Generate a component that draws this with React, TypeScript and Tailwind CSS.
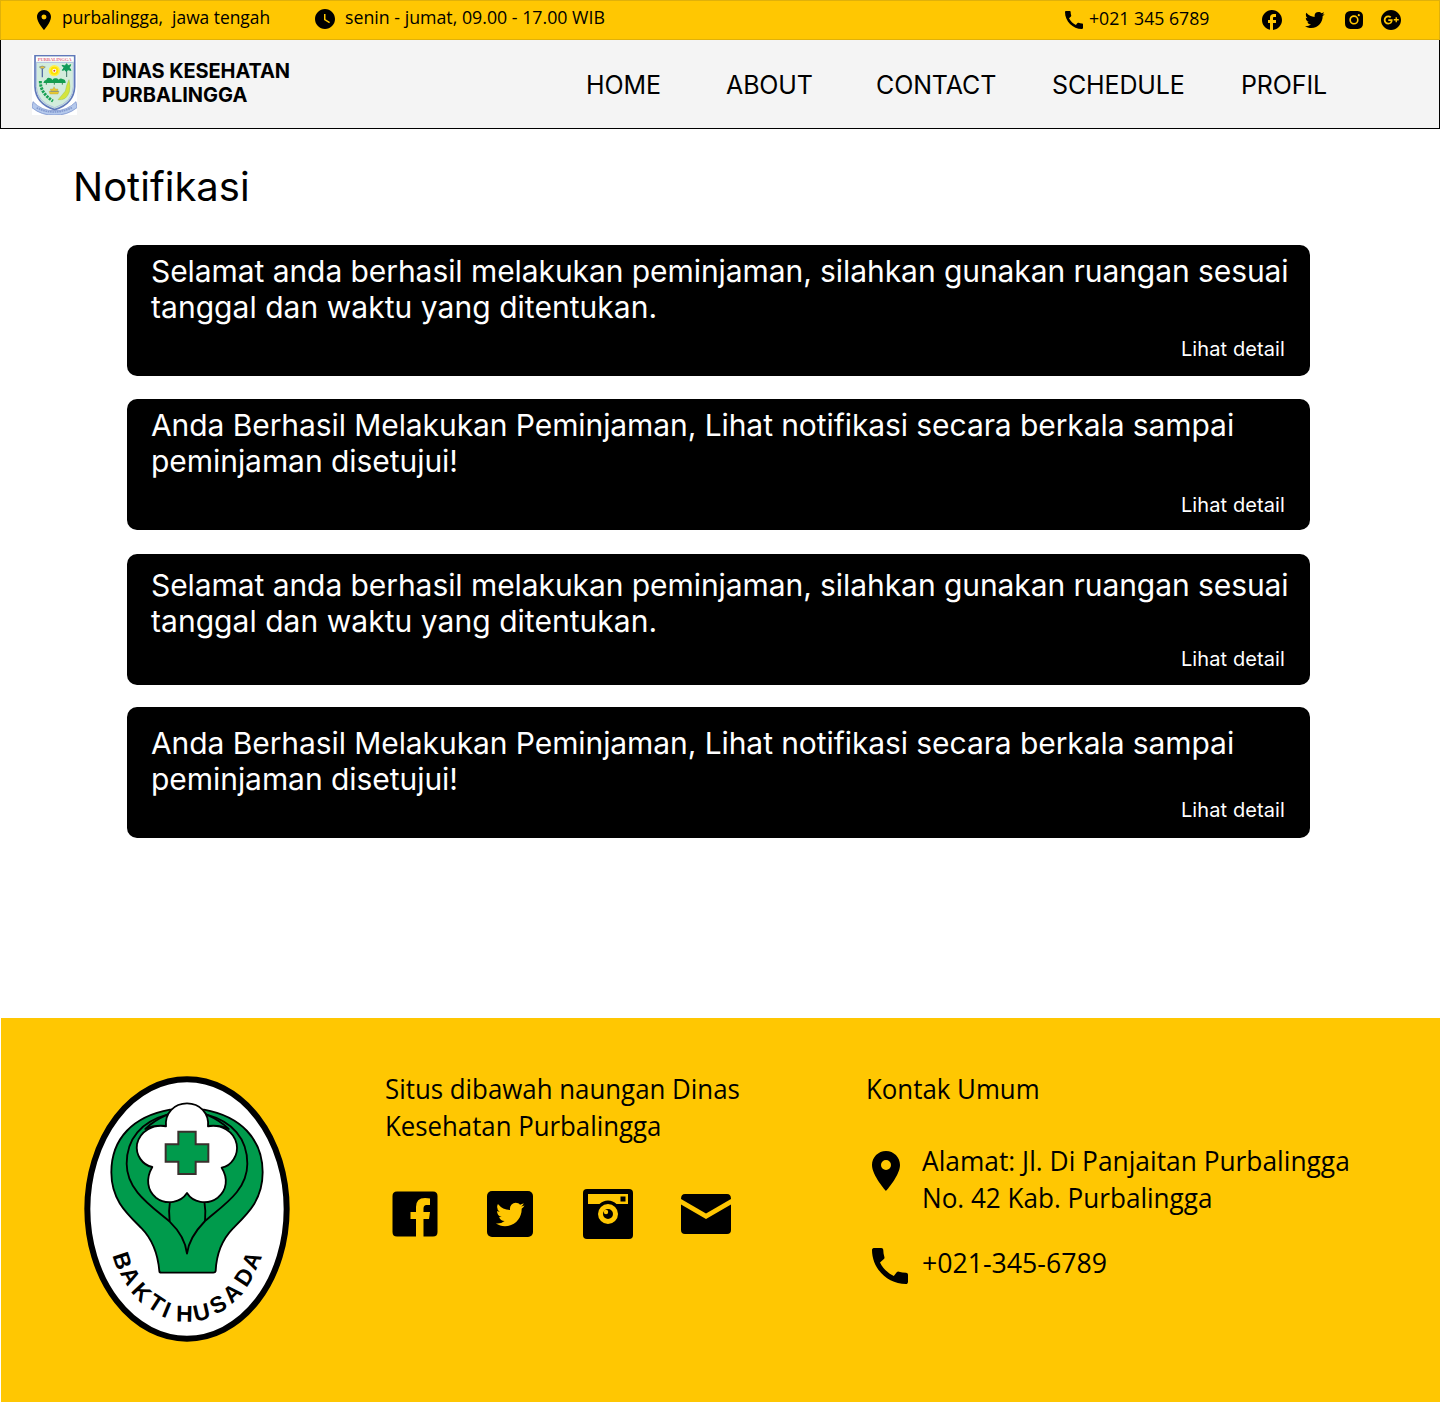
import React from "react";
import { MdLocationOn, MdWatchLater, MdCall, MdFacebook } from "react-icons/md";
import { BiLogoTwitter, BiLogoInstagramAlt, BiLogoGooglePlusCircle } from "react-icons/bi";

const success = [
  "Selamat anda berhasil melakukan peminjaman, silahkan gunakan ruangan sesuai",
  "tanggal dan waktu yang ditentukan.",
];
const pending = [
  "Anda Berhasil Melakukan Peminjaman, Lihat notifikasi secara berkala sampai",
  "peminjaman disetujui!",
];

const notifications = [
  { text: success, card: "mt-[33px] pt-[8px]", link: "mt-[12px]", tracking: "tracking-[-0.07px]", tail: "tracking-[0.04px]" },
  { text: pending, card: "mt-[23px] pt-[8px]", link: "mt-[14px]", tracking: "tracking-[-0.08px]", tail: "tracking-[-0.05px]" },
  { text: success, card: "mt-[24px] pt-[13px]", link: "mt-[8px]", tracking: "tracking-[-0.07px]", tail: "tracking-[0.04px]" },
  { text: pending, card: "mt-[22px] pt-[18px]", link: "mt-px", tracking: "tracking-[-0.08px]", tail: "tracking-[-0.05px]" },
];

const letters: [string, number, number, number][] = [
  ["B", 157, 587, 72],
  ["A", 182, 633, 60],
  ["K", 215, 681, 47],
  ["T", 259, 714, 33],
  ["I", 290, 734, 22],
  ["H", 343, 746, 1],
  ["U", 395, 741, -13],
  ["S", 444, 718, -28],
  ["A", 486, 684, -43],
  ["D", 522, 636, -57],
  ["A", 545, 586, -66],
];

function Narrow({ children, className }: { children: React.ReactNode; className: string }) {
  return (
    <span
      className={`block origin-left whitespace-pre font-['Open_Sans',sans-serif] ${className}`}
    >
      {children}
    </span>
  );
}

function Crest() {
  return (
    <svg width="45" height="60" viewBox="0 0 135 180" className="shrink-0">
      <rect width="135" height="180" fill="#fff" />
      <path
        d="M3 140q26 28 64 27q38 1 65-27l3 18q-30 24-68 22q-38 2-67-22z"
        fill="#b5c9ec"
        stroke="#6c86c6"
        strokeWidth="2"
      />
      <path d="M14 158q50 26 106 0" fill="none" stroke="#8299cf" strokeWidth="5" strokeDasharray="5 2" />
      <path
        d="M9 2H128V95Q126 146 68 164Q11 146 9 95z"
        fill="#d3ecdc"
        stroke="#6078bb"
        strokeWidth="5"
      />
      <path d="M13 22H124V95Q122 142 68 158Q15 142 13 95z" fill="#d3ecdc" stroke="#aebfe2" strokeWidth="3" />
      <rect x="12" y="5" width="113" height="15" fill="#fff" />
      <text
        x="68"
        y="18"
        textAnchor="middle"
        textLength="102"
        fontSize="14"
        fontWeight="700"
        fill="#e06a83"
        fontFamily="Liberation Serif, serif"
      >
        PURBALINGGA
      </text>
      <circle cx="67" cy="47" r="17" fill="#fff04a" />
      <circle cx="67" cy="47" r="12" fill="#ffe100" />
      <circle cx="67" cy="47" r="6" fill="#fff" />
      <circle cx="67" cy="47" r="3" fill="#e23d22" />
      <path d="M22 36q9-6 18 0l-6 5h-6z" fill="#e6c23c" stroke="#486a9c" strokeWidth="1.5" />
      <path d="M31 41v26" stroke="#566ea5" strokeWidth="4" />
      <path d="M104 42v24" stroke="#3d7168" strokeWidth="3" />
      <path
        d="M104 26l4 7 8-4-4 9 5 8-10-2-4 6-4-6-8 2 5-8-6-7 9 2z"
        fill="#119b59"
        stroke="#119b59"
        strokeWidth="3"
      />
      <path d="M34 84q2-9 9-10q3-8 10-5q6 0 8 6q3-6 9-5q7-2 10 4q6-6 13-1q8 1 8 11z" fill="#139e50" />
      <path d="M43 84v5M67 82v7M91 84v5" stroke="#3c8554" strokeWidth="3" />
      <path d="M66 95l4 7h8l-2 7h5l-3 8H54l-3-8h6l-2-7h8z" fill="#e8c935" stroke="#ad983a" />
      <path d="M55 109h25" stroke="#5574a6" strokeWidth="2" />
      <path d="M25 78q0 37 38 60" fill="none" stroke="#16a052" strokeWidth="9" strokeDasharray="7 3" />
      <path d="M111 74q-8 15-11 34-8 10-22 26 25 4 34-23 4-16-1-37" fill="#d4e43e" stroke="#80b53c" />
    </svg>
  );
}

function BaktiHusada() {
  return (
    <svg width="235" height="290" viewBox="0 0 705 870" className="ml-[70px] mt-[47px] shrink-0">
      <ellipse cx="351" cy="432" rx="299" ry="389" fill="#fff" stroke="#000" strokeWidth="18" />
      <g stroke="#000" strokeWidth="5.5" strokeLinejoin="round">
        <path
          d="M300 134C190 154 124 220 124 322C124 405 170 445 215 490C252 528 264 572 268 618Q268 623 274 623H430Q436 623 437 618C439 572 452 528 489 490C534 445 578 405 578 322C578 220 510 154 402 134Z"
          fill="#009b4c"
        />
        <path
          d="M292 149C215 170 170 220 170 296C170 375 240 420 299 470C326 496 347 530 351 566C355 530 378 496 405 468C464 418 532 375 532 296C532 220 487 170 410 149"
          fill="none"
        />
        <path d="M299 470Q295 438 300 408M405 468Q408 438 403 408" fill="none" />
        <path d="M288 183Q294 160 303 143L292 149C260 163 240 178 226 192Q253 179 288 183Z" fill="#009b4c" />
        <path d="M414 183Q408 160 399 143L410 149C442 163 462 178 476 192Q449 179 414 183Z" fill="#009b4c" />
        <path
          d="M288 184C284 144 313 115 351 115C389 115 418 144 414 184C453 177 492 198 500 237C506 270 485 303 455 308C475 340 471 376 443 398C411 422 368 412 351 384C333 412 290 422 258 398C231 376 227 340 247 306C217 300 196 270 201 237C210 198 249 177 288 184Z"
          fill="#fff"
        />
      </g>
      <path d="M325 200H377V238H415V290H377V327H325V290H287V238H325Z" fill="#009b4c" stroke="#3a302d" strokeWidth="6" />
      {letters.map(([ch, x, y, r], i) => (
        <text
          key={i}
          transform={`translate(${x} ${y}) rotate(${r})`}
          y="24"
          textAnchor="middle"
          fontSize="69"
          fontWeight="700"
          fontFamily="Liberation Sans, sans-serif"
        >
          {ch}
        </text>
      ))}
    </svg>
  );
}

function SocialRow() {
  return (
    <div className="mt-[45px] flex h-[50px] items-center pl-[7px]">
      <svg width="46" height="46" viewBox="0 0 46 46">
        <path
          fillRule="evenodd"
          d="M5 .5H41Q45.500 .5 45.500 5V41Q45.500 45.500 41 45.500H31.500V28H37L38 21H31.500V17.500Q31.500 14 34.500 14H38V7.500Q36 7 33 7Q24 7 24 16V21H18.500V28H24V45.500H5Q.5 45.500 .5 41V5Q.5 .5 5 .5Z"
        />
      </svg>
      <div className="ml-[49px] flex h-[46px] w-[46px] items-center justify-center rounded-[5px] bg-black text-[#ffc702]">
        <BiLogoTwitter size={35} />
      </div>
      <svg width="50" height="50" viewBox="0 0 50 50" className="ml-[50px]">
        <rect width="50" height="50" rx="4" />
        <path d="M5 5H45V15H33.500A12 12 0 0 0 16.500 15H5Z" fill="#ffc702" />
        <rect x="37.500" y="7.500" width="5" height="5" />
        <circle cx="25" cy="25" r="7.500" fill="none" stroke="#ffc702" strokeWidth="5" />
        <circle cx="23" cy="23" r="2.200" fill="#ffc702" />
      </svg>
      <svg width="50" height="40" viewBox="0 0 50 40" className="ml-[48px]">
        <path d="M0 5Q0 0 4 0H46Q50 0 50 5L25 19.500Z" />
        <path d="M0 10.500L25 25L50 10.500V36Q50 40 46 40H4Q0 40 0 36Z" />
      </svg>
    </div>
  );
}

export default function App() {
  return (
    <div className="flex h-[1402px] w-[1440px] flex-col overflow-hidden bg-white font-['Inter',sans-serif] text-black">
      <div className="flex h-[40px] shrink-0 items-center border border-[#e0b10a] bg-[#ffc702]">
        <MdLocationOn size={24} className="ml-[31px] shrink-0" />
        <Narrow className="ml-[6px] mb-[6px] w-[252px] text-[18px] leading-[24px] scale-x-[0.965]">
          {"purbalingga,  jawa tengah"}
        </Narrow>
        <MdWatchLater size={24} className="-ml-px mb-[2px] shrink-0" />
        <Narrow className="ml-[8px] mb-[6px] w-[717px] text-[18px] leading-[24px] scale-x-[0.987]">
          senin - jumat, 09.00 - 17.00 WIB
        </Narrow>
        <MdCall size={24} className="mb-px shrink-0" />
        <Narrow className="ml-[3px] mb-[4px] w-[171px] text-[18px] leading-[24px] scale-x-[0.982]">
          +021 345 6789
        </Narrow>
        <MdFacebook size={24} className="shrink-0" />
        <BiLogoTwitter size={24} className="ml-[19px] shrink-0" />
        <BiLogoInstagramAlt size={24} className="ml-[15px] shrink-0" />
        <BiLogoGooglePlusCircle size={24} className="ml-[13px] shrink-0" />
      </div>
      <header className="flex h-[89px] shrink-0 border border-t-0 border-black bg-[#f4f4f4] pl-[31px] pt-[15px]">
        <Crest />
        <div className="ml-[25px] mt-[4px] w-[484px] text-[20px] font-bold leading-[24px]">
          <span className="tracking-[-0.1px]">DINAS KESEHATAN</span>
          <br />
          PURBALINGGA
        </div>
        <nav className="mt-[14px] flex text-[25px] leading-[32px] tracking-[-0.12px]">
          <a className="w-[140px]">HOME</a>
          <a className="w-[150px]">ABOUT</a>
          <a className="w-[176px]">CONTACT</a>
          <a className="w-[189px]">SCHEDULE</a>
          <a>PROFIL</a>
        </nav>
      </header>
      <main className="h-[889px] shrink-0">
        <h1 className="ml-[73px] mt-[33px] text-[40px] leading-[50px]">Notifikasi</h1>
        {notifications.map((n, i) => (
          <section
            key={i}
            className={`ml-[127px] h-[131px] w-[1183px] rounded-[10px] bg-black pl-[24px] text-white ${n.card}`}
          >
            <p className="whitespace-nowrap text-[30px] leading-[36px]">
              <span className={n.tracking}>{n.text[0]}</span>
              <br />
              <span className={n.tail}>{n.text[1]}</span>
            </p>
            <a className={`mr-[25px] block text-right text-[20px] leading-[24px] tracking-[0.1px] ${n.link}`}>
              Lihat detail
            </a>
          </section>
        ))}
      </main>
      <footer className="ml-px flex h-[384px] shrink-0 bg-[#ffc702]">
        <div className="w-[384px]">
          <div className="-ml-px">
            <BaktiHusada />
          </div>
        </div>
        <div className="w-[481px] pt-[52px]">
          <Narrow className="text-[27px] leading-[37px] scale-x-[0.957]">Situs dibawah naungan Dinas</Narrow>
          <Narrow className="text-[27px] leading-[37px] scale-x-[0.955]">Kesehatan Purbalingga</Narrow>
          <SocialRow />
        </div>
        <div className="pt-[52px]">
          <Narrow className="text-[27px] leading-[37px] scale-x-[0.957]">Kontak Umum</Narrow>
          <div className="mt-[35px] flex">
            <MdLocationOn size={48} className="-ml-[4px] mt-[5px] shrink-0" />
            <div className="ml-[12px]">
              <Narrow className="text-[27px] leading-[37px] scale-x-[0.975]">Alamat: Jl. Di Panjaitan Purbalingga</Narrow>
              <Narrow className="text-[27px] leading-[37px] scale-x-[0.966]">No. 42 Kab. Purbalingga</Narrow>
            </div>
          </div>
          <div className="mt-[25px] flex">
            <MdCall size={48} className="mt-px shrink-0" />
            <Narrow className="ml-[8px] mt-[3px] text-[27px] leading-[37px] scale-x-[0.988]">+021-345-6789</Narrow>
          </div>
        </div>
      </footer>
    </div>
  );
}
